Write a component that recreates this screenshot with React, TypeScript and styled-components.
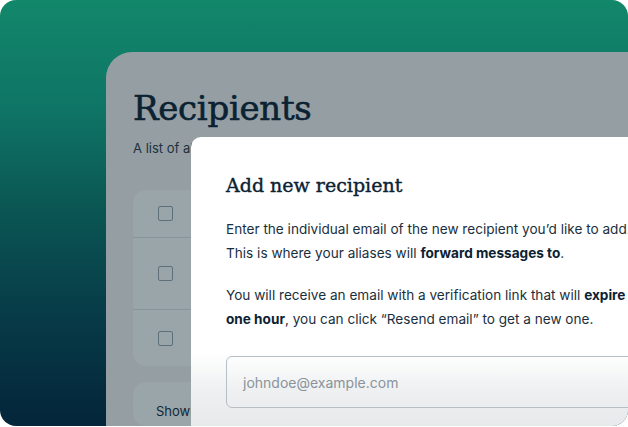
import React from "react";
import styled, { createGlobalStyle } from "styled-components";

const Global = createGlobalStyle`
  html, body { margin: 0; padding: 0; background: #ffffff; }
  * { box-sizing: border-box; }
`;

const Frame = styled.div`
  position: relative;
  width: 628px;
  height: 426px;
  border-radius: 16px;
  overflow: hidden;
  background: linear-gradient(180deg, #12876a 0%, #0f7566 25%, #0a5553 50%, #073a47 75%, #04253a 100%);
  display: flex;
  padding: 52px 0 0 106px;
`;

const Panel = styled.div`
  flex: 1;
  background: #959fa3;
  border-top-left-radius: 26px;
  padding: 36px 0 0 27px;
  display: flex;
  flex-direction: column;
  align-items: flex-start;
`;

const Heading = styled.h1`
  margin: 0;
  font-family: "DejaVu Serif", "Liberation Serif", serif;
  font-weight: 400;
  font-size: 34px;
  line-height: 40px;
  color: #0b2233;
  -webkit-text-stroke: 0.6px #0b2233;
  letter-spacing: -0.3px;
`;

const Subtitle = styled.p`
  margin: 10px 0 0;
  font-family: Inter, "Liberation Sans", sans-serif;
  font-size: 13px;
  line-height: 20px;
  color: #1d3140;
  white-space: nowrap;
`;

const TableCard = styled.div`
  margin-top: 32px;
  width: 420px;
  background: #9aa5a9;
  border-radius: 13px;
  display: flex;
  flex-direction: column;
`;

const Row = styled.div<{ $h: number; $last?: boolean }>`
  height: ${(p) => p.$h}px;
  display: flex;
  align-items: center;
  padding-left: 25px;
  border-bottom: ${(p) => (p.$last ? "none" : "1px solid #87949a")};
`;

const Check = styled.span`
  width: 15px;
  height: 15px;
  border: 1.5px solid #5f6f78;
  border-radius: 2px;
`;

const FooterCard = styled.div`
  margin-top: 16px;
  width: 420px;
  height: 60px;
  background: #9aa5a9;
  border-radius: 13px;
  padding: 21px 0 0 23px;
  font-family: Inter, "Liberation Sans", sans-serif;
  font-size: 13px;
  color: #0f2736;
  white-space: nowrap;
`;

const Modal = styled.div`
  position: absolute;
  left: 191px;
  top: 137px;
  right: -40px;
  bottom: -20px;
  border-top-left-radius: 10px;
  background: linear-gradient(180deg, #ffffff 0%, #ffffff 70%, #eef0f1 82%, #e3e6e8 100%);
  padding: 34px 0 0 35px;
  font-family: Inter, "Liberation Sans", sans-serif;
  color: #1a2f3d;
`;

const ModalTitle = styled.h2`
  margin: 0;
  font-family: "DejaVu Serif", "Liberation Serif", serif;
  font-weight: 400;
  font-size: 19px;
  line-height: 28px;
  color: #0b2233;
  -webkit-text-stroke: 0.4px #0b2233;
`;

const Para = styled.p`
  margin: 18px 0 0;
  font-size: 13.6px;
  line-height: 24px;
  white-space: nowrap;
  & b { font-weight: 700; color: #0b2233; }
`;

const Input = styled.div`
  margin-top: 25px;
  height: 52px;
  border: 1px solid #b8bfc4;
  border-radius: 6px;
  padding-left: 16px;
  display: flex;
  align-items: center;
  font-size: 14px;
  color: #8a939a;
`;

export default function App() {
  return (
    <>
      <Global />
      <Frame>
        <Panel>
          <Heading>Recipients</Heading>
          <Subtitle>A list of all the recipients you have added</Subtitle>
          <TableCard>
            <Row $h={48}><Check /></Row>
            <Row $h={72}><Check /></Row>
            <Row $h={56} $last><Check /></Row>
          </TableCard>
          <FooterCard>Showing 1 to 3 of 3 results</FooterCard>
        </Panel>
        <Modal>
          <ModalTitle>Add new recipient</ModalTitle>
          <Para>
            Enter the individual email of the new recipient you’d like to add.
            <br />
            This is where your aliases will <b>forward messages to</b>.
          </Para>
          <Para>
            You will receive an email with a verification link that will <b>expire in</b>
            <br />
            <b>one hour</b>, you can click “Resend email” to get a new one.
          </Para>
          <Input>johndoe@example.com</Input>
        </Modal>
      </Frame>
    </>
  );
}
